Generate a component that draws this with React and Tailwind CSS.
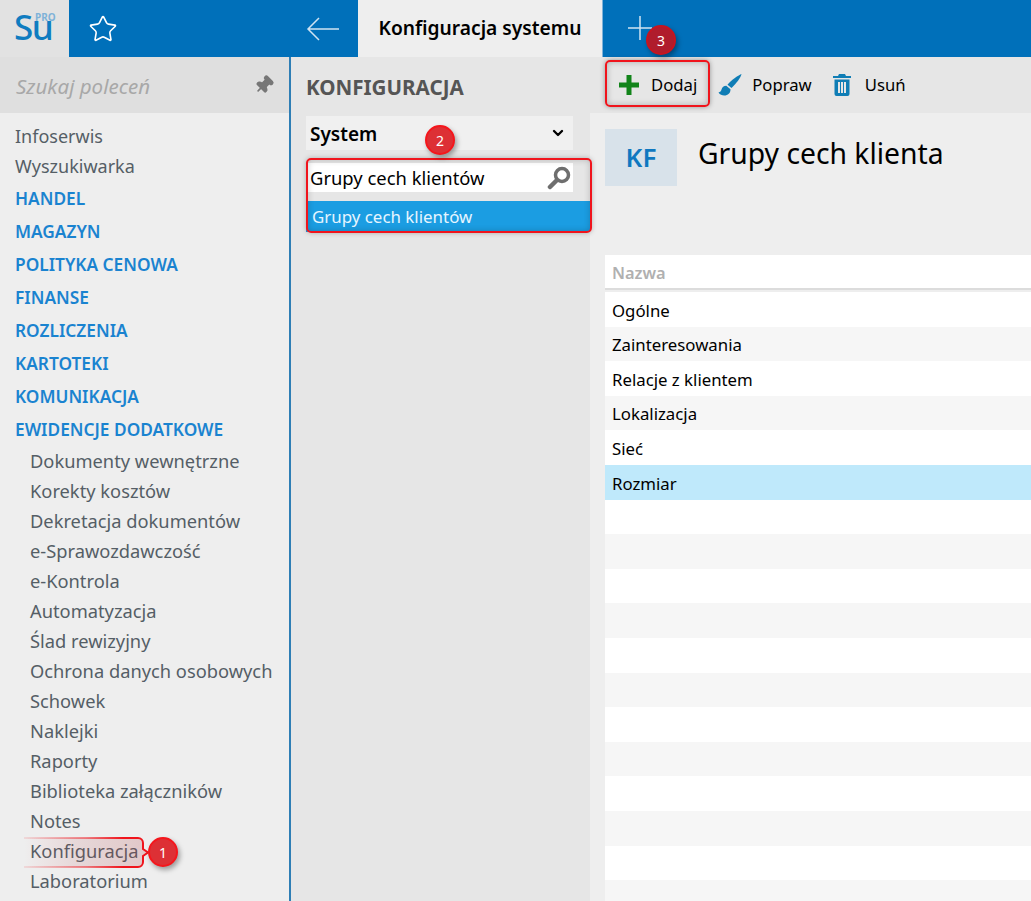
import { Star, Pin, ChevronDown } from 'lucide-react';

const FONT = "font-['Noto_Sans','Open_Sans',sans-serif]";

const topItems = ['Infoserwis', 'Wyszukiwarka'];
const groups = ['HANDEL', 'MAGAZYN', 'POLITYKA CENOWA', 'FINANSE', 'ROZLICZENIA', 'KARTOTEKI', 'KOMUNIKACJA', 'EWIDENCJE DODATKOWE'];
const subItems = [
  'Dokumenty wewnętrzne',
  'Korekty kosztów',
  'Dekretacja dokumentów',
  'e-Sprawozdawczość',
  'e-Kontrola',
  'Automatyzacja',
  'Ślad rewizyjny',
  'Ochrona danych osobowych',
  'Schowek',
  'Naklejki',
  'Raporty',
  'Biblioteka załączników',
  'Notes',
  'Konfiguracja',
  'Laboratorium',
];
const rows = ['Ogólne', 'Zainteresowania', 'Relacje z klientem', 'Lokalizacja', 'Sieć', 'Rozmiar', '', '', '', '', '', '', '', '', '', '', '', ''];

const Badge = ({ n, className }) => (
  <div className={`absolute w-[30px] h-[30px] rounded-full border-2 text-white text-[14px] flex items-center justify-center shadow-[2px_3px_5px_rgba(0,0,0,0.35)] ${className}`}>
    {n}
  </div>
);

const Brush = () => (
  <svg width="24" height="22" viewBox="0 0 24 22" fill="#0f7db5">
    <path d="M23.500 0C21 1 13 6 9.500 10.800l4 3.200C18 10 23 3 23.500 0z" />
    <path d="M8.300 11.800c-2.500 0-4.300 1.500-4.800 3.700-.3 1.600-1.300 2.600-3 3 1.500 2.200 3.500 3 5.700 3 3.800 0 6.300-2.400 6.300-6.300l-4.200-3.400z" />
  </svg>
);

const Trash = () => (
  <svg width="18" height="22" viewBox="0 0 18 22" fill="#0f7db5">
    <path d="M6 0h6l1 2h5v2H0V2h5l1-2z" />
    <path fillRule="evenodd" d="M1.500 5.500h15V20a2 2 0 0 1-2 2h-11a2 2 0 0 1-2-2V5.500zM5 8v11h2V8H5zm3 0v11h2V8H8zm3 0v11h2V8h-2z" />
  </svg>
);

const AddIcon = () => (
  <svg width="20" height="20" viewBox="0 0 20 20" fill="#12841a">
    <path d="M7.500 0h5v7.500H20v5h-7.500V20h-5v-7.500H0v-5h7.500z" />
  </svg>
);

const Loupe = () => (
  <svg width="24" height="24" viewBox="0 0 24 24" fill="none" stroke="#6e6e6e">
    <circle cx="15" cy="9" r="6.500" strokeWidth="3.500" />
    <path d="M9.500 14.500 3 21" strokeWidth="4.500" strokeLinecap="round" />
  </svg>
);

// callout around the menu item, fades out to the left
const Callout = () => (
  <svg className="absolute left-[22px] top-[836px]" width="128" height="33" viewBox="0 0 128 33" fill="none">
    <defs>
      <linearGradient id="calloutFill" x1="0" x2="1" y1="0" y2="0">
        <stop offset="0" stopColor="#d9313a" stopOpacity="0" />
        <stop offset="0.4" stopColor="#b03a40" stopOpacity="0.12" />
        <stop offset="1" stopColor="#b03a40" stopOpacity="0.22" />
      </linearGradient>
      <linearGradient id="calloutLine" x1="0" x2="1" y1="0" y2="0">
        <stop offset="0" stopColor="#f0141c" stopOpacity="0.1" />
        <stop offset="0.5" stopColor="#f0141c" stopOpacity="0.5" />
        <stop offset="0.8" stopColor="#f0141c" />
      </linearGradient>
    </defs>
    <path
      d="M2 2h114a5 5 0 0 1 5 5v6l5 3.500-5 3.500v6a5 5 0 0 1-5 5H2z"
      fill="url(#calloutFill)"
    />
    <path
      d="M2 2h114a5 5 0 0 1 5 5v6l5 3.500-5 3.500v6a5 5 0 0 1-5 5H2"
      stroke="url(#calloutLine)"
      strokeWidth="2"
    />
  </svg>
);

export default function App() {
  return (
    <div className={`${FONT} relative w-[1031px] h-[901px] overflow-hidden bg-[#eeeeee] flex flex-col`}>
      {/* top bar */}
      <div className="h-[57px] flex-none flex bg-[#0070ba]">
        <div className="w-[69px] bg-[#e2e2e2] relative flex-none">
          <span className="absolute left-[14px] top-[23px] text-[35px] leading-[8px] font-medium text-[#0f7cc0] tracking-[-1.500px]">Su</span>
          <span className="absolute left-[35px] top-[13px] text-[10px] leading-[9px] font-bold text-[#7fb2d8]">PRO</span>
        </div>
        <div className="w-[236px] flex-none flex items-center pl-[19px]">
          <Star size={30} strokeWidth={1.3} className="text-white" />
        </div>
        <div className="w-[53px] flex-none flex items-center pl-[1px]">
          <svg width="34" height="26" viewBox="0 0 34 26" fill="none" stroke="#cfe3f2" strokeWidth="1.500">
            <path d="M33 13H2M13 2 2 13l11 11" />
          </svg>
        </div>
        <div className="w-[245px] flex-none bg-[#eeeeee] border-r border-[#7fb2d8] flex items-center justify-center text-[19.200px] font-semibold text-black">
          Konfiguracja systemu
        </div>
        <div className="pl-[25px] flex items-center pb-[2px]">
          <svg width="24" height="24" viewBox="0 0 24 24" fill="none" stroke="#cfe3f2" strokeWidth="1.500">
            <path d="M12 0v24M0 12h24" />
          </svg>
        </div>
      </div>

      <div className="flex-1 flex min-h-0">
        {/* sidebar */}
        <div className="w-[291px] flex-none border-r-2 border-[#2e7eb5] flex flex-col">
          <div className="h-[56px] flex-none bg-[#dfdfdf] flex items-center justify-between pl-[16px] pr-[15px]">
            <span className="italic text-[20.500px] pt-[3px] text-[#a8a8a8]">Szukaj poleceń</span>
            <Pin size={20} fill="#777777" className="text-[#777777] rotate-45" />
          </div>
          <div className="pl-[15px] pt-[8px] flex flex-col">
            {topItems.map((t) => (
              <div key={t} className="h-[30.500px] flex items-center text-[18px] text-[#555e66]">{t}</div>
            ))}
            {groups.map((g) => (
              <div key={g} className="h-[33px] flex items-center text-[17.300px] font-semibold text-[#1a83d0] whitespace-nowrap">{g}</div>
            ))}
            <div className="pl-[15px] flex flex-col">
              {subItems.map((s) => (
                <div key={s} className="h-[30px] flex items-center text-[18.300px] text-[#555e66] whitespace-nowrap">{s}</div>
              ))}
            </div>
          </div>
        </div>

        {/* middle column */}
        <div className="w-[299px] flex-none bg-[#e6e6e6] pl-[15px] flex flex-col">
          <div className="h-[59px] flex-none flex items-center pt-[2px] text-[20.600px] font-bold text-[#555555]">KONFIGURACJA</div>
          <div className="w-[267px] h-[34px] bg-[#f0f0f0] flex items-center justify-between pl-[4px] pr-[7px] text-[19px] font-semibold text-black">
            <span className="pt-[2px]">System</span>
            <ChevronDown size={16} strokeWidth={3.5} />
          </div>
          <div className="mt-[13px] w-[267px] h-[29px] bg-white flex items-center justify-between pl-[4px] pr-[2px] text-[18.400px] text-black">
            Grupy cech klientów
            <Loupe />
          </div>
          <div className="mt-[9px] pl-[6px] h-[31px] bg-[#1b9de2] flex items-center text-[16.900px] text-[#e6f5ff]">
            Grupy cech klientów
          </div>
        </div>

        {/* main */}
        <div className="flex-1 min-w-0 flex flex-col">
          <div className="h-[56px] flex-none bg-[#e6e6e6] flex items-center pl-[29px] text-[16.700px] text-black">
            <AddIcon />
            <span className="ml-[12px]">Dodaj</span>
            <span className="ml-[21px] flex"><Brush /></span>
            <span className="ml-[10px]">Popraw</span>
            <span className="ml-[21px] flex"><Trash /></span>
            <span className="ml-[14px]">Usuń</span>
          </div>
          <div className="flex-1 pl-[15px] pt-[16px] min-h-0">
            <div className="flex h-[57px]">
              <div className="w-[72px] bg-[#d8e2ea] flex items-center justify-center text-[26px] font-semibold text-[#0f78c0]">KF</div>
              <div className="ml-[21px] text-[28.300px] leading-[48px] text-black">Grupy cech klienta</div>
            </div>
            <div className="mt-[69px] h-[35px] bg-white border-b-2 border-[#dcdcdc] flex items-center pl-[7px] pt-[3px] text-[16.400px] font-semibold text-[#b0b0b0]">
              Nazwa
            </div>
            <div className="mt-[2px] flex flex-col">
              {rows.map((r, i) => (
                <div
                  key={i}
                  className={`h-[34.600px] flex-none flex items-center pl-[7px] pt-[2px] text-[16.800px] text-black ${
                    r === 'Rozmiar' ? 'bg-[#bfe9fb]' : i % 2 === 0 ? 'bg-white' : 'bg-[#f6f6f6]'
                  }`}
                >
                  {r}
                </div>
              ))}
            </div>
          </div>
        </div>
      </div>

      {/* annotations */}
      <div className="absolute left-[605px] top-[60px] w-[105px] h-[47px] rounded-[5px] border-2 border-[#f0141c] shadow-[0_0_5px_rgba(0,0,0,0.35),inset_0_0_6px_rgba(0,0,0,0.25)]" />
      <div className="absolute left-[306px] top-[158px] w-[286px] h-[75px] rounded-[5px] border-2 border-[#f0141c] shadow-[0_0_5px_rgba(0,0,0,0.25),inset_0_0_6px_rgba(0,0,0,0.2)]" />
      <Callout />
      <Badge n="1" className="left-[148px] top-[837px] bg-[#dd3035] border-[#f5161c]" />
      <Badge n="2" className="left-[425px] top-[125px] bg-[#dd3035] border-[#f5161c]" />
      <Badge n="3" className="left-[646px] top-[25px] bg-[#b01c2c] border-[#c8141f]" />
    </div>
  );
}
